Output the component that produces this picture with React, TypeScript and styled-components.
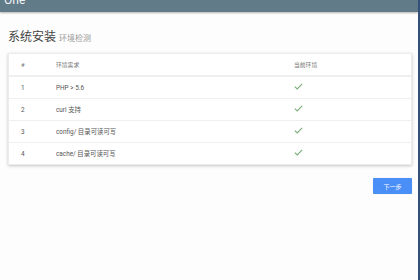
import React from 'react';
import styled, { createGlobalStyle } from 'styled-components';

const GlobalStyle = createGlobalStyle`
  html, body {
    margin: 0;
    padding: 0;
    background: #fdfdfd;
  }
  body {
    font-family: Roboto, "Noto Sans CJK SC", sans-serif;
    -webkit-font-smoothing: antialiased;
  }
`;

const Page = styled.div`
  width: 418px;
  height: 280px;
  border-right: 2px solid #34507a;
  background: #fdfdfd;
  display: flex;
  flex-direction: column;
  overflow: hidden;
`;

const TopBar = styled.div`
  height: 12px;
  flex-shrink: 0;
  background: #617b89;
  box-shadow: 0 1px 2px rgba(0, 0, 0, 0.3);
  overflow: hidden;
  padding-left: 4px;
  span {
    display: block;
    margin-top: -8px;
    color: #f2f5f7;
    font-size: 12px;
    line-height: 16px;
  }
`;

const Content = styled.div`
  padding: 18px 6px 0 8px;
  display: flex;
  flex-direction: column;
`;

const Title = styled.h1`
  margin: 0 0 7px;
  font-size: 12px;
  line-height: 14px;
  font-weight: 400;
  color: #444;
  display: flex;
  align-items: baseline;
  gap: 3px;
  small {
    font-size: 8px;
    color: #9a9a9a;
  }
`;

const Card = styled.div`
  background: #fff;
  border: 1px solid #ececec;
  box-shadow: 0 1px 3px rgba(0, 0, 0, 0.22);
`;

const Row = styled.div<{ head?: boolean }>`
  display: grid;
  grid-template-columns: 35px 238px 1fr;
  align-items: center;
  height: 21px;
  border-bottom: ${(p) => (p.head ? '2px' : '1px')} solid #eef0f0;
  font-size: ${(p) => (p.head ? '5.8px' : '6.4px')};
  color: ${(p) => (p.head ? '#777' : '#555')};
  &:last-child {
    border-bottom: none;
  }
  > div {
    padding-left: 12px;
  }
`;

const Check = () => (
  <svg width="9" height="7" viewBox="0 0 9 7">
    <polyline points="0.8,3.6 3.2,6 8.2,0.8" fill="none" stroke="#7aae7a" strokeWidth="1.1" />
  </svg>
);

const Footer = styled.div`
  display: flex;
  justify-content: flex-end;
  margin-top: 13px;
`;

const NextButton = styled.button`
  width: 39px;
  height: 16px;
  border: none;
  border-radius: 1px;
  background: #4a8ef8;
  color: #fff;
  font-family: Roboto, "Noto Sans CJK SC", sans-serif;
  font-size: 6px;
  padding: 0;
  box-shadow: 0 0 1px rgba(0, 0, 0, 0.2);
`;

const checks = [
  { id: 1, name: 'PHP > 5.6' },
  { id: 2, name: 'curl 支持' },
  { id: 3, name: 'config/ 目录可读可写' },
  { id: 4, name: 'cache/ 目录可读可写' },
];

const App = () => {
  return (
    <Page>
      <GlobalStyle />
      <TopBar>
        <span>One</span>
      </TopBar>
      <Content>
        <Title>
          系统安装<small>环境检测</small>
        </Title>
        <Card>
          <Row head>
            <div>#</div>
            <div>环境需求</div>
            <div>当前环境</div>
          </Row>
          {checks.map((c) => (
            <Row key={c.id}>
              <div>{c.id}</div>
              <div>{c.name}</div>
              <div>
                <Check />
              </div>
            </Row>
          ))}
        </Card>
        <Footer>
          <NextButton>下一步</NextButton>
        </Footer>
      </Content>
    </Page>
  );
};

export default App;
